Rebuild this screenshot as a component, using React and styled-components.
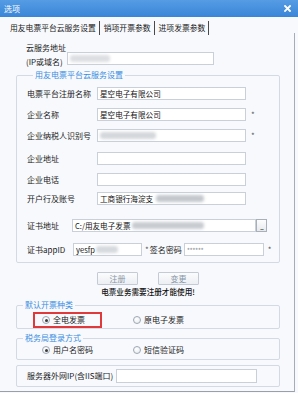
import React from 'react';
import styled, { createGlobalStyle, css } from 'styled-components';

const GlobalStyle = createGlobalStyle`
  * {
    margin: 0;
    padding: 0;
    box-sizing: border-box;
  }
  html, body {
    width: 298px;
    height: 393px;
    overflow: hidden;
    background: #f7f9fd;
  }
  body {
    font-family: "Noto Sans CJK SC", "Noto Sans", sans-serif;
    font-size: 8px;
    color: #1a1a1a;
  }
`;

const Window = styled.div`
  width: 298px;
  height: 393px;
  display: flex;
  flex-direction: column;
  background: #f7f9fd;
  overflow: hidden;
`;

const TitleBar = styled.div`
  height: 17px;
  flex: none;
  display: flex;
  align-items: center;
  justify-content: space-between;
  padding: 0 7px 0 4px;
  background: linear-gradient(#559ce4, #3a85d8);
  color: #fff;
  font-size: 8px;
  line-height: 10px;
`;

const TabStrip = styled.div`
  height: 21px;
  flex: none;
  display: flex;
  align-items: center;
  padding: 0 3px 0 10px;
`;

const Tab = styled.div`
  height: 14px;
  line-height: 14px;
  padding-right: 3px;
  margin-right: 4px;
  border-right: 1px solid #4a4a4a;
  white-space: nowrap;
  font-size: 7.8px;
`;

const TabFill = styled.div`
  flex: 1;
  align-self: flex-end;
  height: 5px;
  border-right: 1px solid #a7adb5;
`;

const Panel = styled.div`
  height: 354px;
  flex: none;
  margin-right: 3px;
  border-right: 1px solid #a7adb5;
  border-bottom: 1px solid #9aa0a8;
  padding: 3px 0 0 16px;
  display: flex;
  flex-direction: column;
`;

const CloudRow = styled.div`
  display: flex;
  align-items: flex-start;
  padding-left: 10px;
  height: 28px;
`;

const CloudLabel = styled.div`
  width: 41px;
  line-height: 14px;
  white-space: nowrap;
`;

const Group = styled.fieldset`
  width: 264px;
  margin-top: ${p => p.$mt ?? 0}px;
  border: 1px solid #d3dae4;
  border-radius: 2px;
  padding: 0 0 ${p => p.$pb ?? 0}px ${p => p.$pl ?? 10}px;
`;

const Legend = styled.legend`
  font-size: 8px;
  line-height: 12px;
  color: #3b8de0;
  padding: 0 2px;
  margin-left: 6px;
`;

const Row = styled.div`
  display: flex;
  align-items: center;
  height: 13px;
  margin-top: ${p => p.$mt}px;
`;

const Label = styled.div`
  width: ${p => p.$w}px;
  flex: none;
  white-space: nowrap;
  line-height: 10px;
`;

const Field = styled.div`
  width: ${p => p.$w}px;
  height: ${p => p.$h ?? 13}px;
  margin-top: ${p => p.$mt ?? 0}px;
  flex: none;
  background: #fff;
  border: 1px solid #c9d0da;
  padding: 0 2px;
  display: flex;
  align-items: center;
  overflow: hidden;
  white-space: nowrap;
  font-size: 7.6px;
  line-height: 10px;
  color: #111;
`;

const Blur = styled.span`
  display: inline-block;
  flex: none;
  width: ${p => p.$w}px;
  height: 7px;
  margin-left: ${p => p.$ml ?? 0}px;
  background: ${p => p.$c || '#cdd0d5'};
  border-radius: 3px;
  filter: blur(1.5px);
`;

const Masked = styled.span`
  color: #8a8f96;
  font-size: 7px;
  letter-spacing: -0.5px;
`;

const Star = styled.span`
  margin-left: ${p => p.$ml ?? 0}px;
  margin-right: ${p => p.$mr ?? 0}px;
  color: #555;
  font-size: 8px;
  line-height: 10px;
`;

const BrowseButton = styled.div`
  width: 11px;
  height: 13px;
  flex: none;
  border: 1px solid #a9b0ba;
  background: linear-gradient(#fdfdfe, #e6e9ed);
  display: flex;
  align-items: flex-end;
  justify-content: center;
  font-size: 7px;
  line-height: 8px;
  color: #333;
  letter-spacing: -1px;
`;

const ButtonRow = styled.div`
  width: 264px;
  display: flex;
  justify-content: center;
  gap: 20px;
  margin-top: 9px;
`;

const Button = styled.div`
  width: 41px;
  height: 13px;
  border: 1px solid #c4cbd5;
  border-radius: 1px;
  background: linear-gradient(#fbfcfd, #eceff3);
  color: #8796a6;
  font-size: 8px;
  line-height: 11px;
  text-align: center;
`;

const Notice = styled.div`
  width: 264px;
  margin-top: 2px;
  text-align: center;
  line-height: 10px;
  font-size: 7.6px;
  font-weight: 500;
  color: #111;
`;

const RadioRow = styled.div`
  display: grid;
  grid-template-columns: ${p => p.$col}px auto;
  align-items: center;
  height: ${p => p.$h}px;
  margin-top: ${p => p.$mt ?? 0}px;
  padding-left: ${p => p.$pl}px;
`;

const Option = styled.div`
  display: flex;
  align-items: center;
  gap: 3px;
  height: 100%;
  white-space: nowrap;
  line-height: 10px;
  ${p => p.$boxed && css`
    width: 69px;
    border: 2px solid #e0393b;
    padding-left: 7px;
  `}
`;

const Radio = styled.span`
  width: 8px;
  height: 8px;
  flex: none;
  border-radius: 50%;
  border: 1px solid #9ea7b2;
  background: radial-gradient(circle at 40% 35%, #ffffff, #e4e8ed);
  display: flex;
  align-items: center;
  justify-content: center;
`;

const Dot = styled.span`
  width: 3px;
  height: 3px;
  border-radius: 50%;
  background: #3a3a3a;
`;

const IpBox = styled.div`
  width: 264px;
  margin-top: 5px;
  border: 1px solid #d3dae4;
  border-radius: 2px;
  padding: 3px 0 3px 10px;
  display: flex;
  align-items: center;
`;

const CloseIcon = () => (
  <svg width="7" height="7" viewBox="0 0 7 7">
    <path d="M1 1 L6 6 M6 1 L1 6" stroke="#fff" strokeWidth="1.8" strokeLinecap="square" />
  </svg>
);

const RadioItem = ({ checked, boxed, children }) => (
  <Option $boxed={boxed}>
    <Radio>{checked && <Dot />}</Radio>
    {children}
  </Option>
);

export default function App() {
  return (
    <>
      <GlobalStyle />
      <Window>
        <TitleBar>
          <span>选项</span>
          <CloseIcon />
        </TitleBar>
        <TabStrip>
          <Tab>用友电票平台云服务设置</Tab>
          <Tab>销项开票参数</Tab>
          <Tab>进项发票参数</Tab>
          <TabFill />
        </TabStrip>
        <Panel>
          <CloudRow>
            <CloudLabel>
              云服务地址
              <br />
              (IP或域名)
            </CloudLabel>
            <Field $w={147} $mt={11}>
              <Blur $w={40} $c="#dcdee2" />
            </Field>
          </CloudRow>

          <Group $pb={6}>
            <Legend>用友电票平台云服务设置</Legend>
            <Row $mt={6}>
              <Label $w={70}>电票平台注册名称</Label>
              <Field $w={149}>星空电子有限公司</Field>
            </Row>
            <Row $mt={8}>
              <Label $w={70}>企业名称</Label>
              <Field $w={149}>星空电子有限公司</Field>
              <Star $ml={5}>*</Star>
            </Row>
            <Row $mt={8}>
              <Label $w={70}>企业纳税人识别号</Label>
              <Field $w={149}>
                <Blur $w={56} $c="#d4d7db" />
              </Field>
              <Star $ml={5}>*</Star>
            </Row>
            <Row $mt={10}>
              <Label $w={70}>企业地址</Label>
              <Field $w={149} />
            </Row>
            <Row $mt={8}>
              <Label $w={70}>企业电话</Label>
              <Field $w={149} />
            </Row>
            <Row $mt={6}>
              <Label $w={70}>开户行及账号</Label>
              <Field $w={149}>
                工商银行海淀支
                <Blur $w={48} $ml={3} $c="#c4c8cd" />
              </Field>
            </Row>
            <Row $mt={14}>
              <Label $w={45}>证书地址</Label>
              <Field $w={184}>
                C:/用友电子发票
                <Blur $w={72} $ml={1} $c="#c8cbd0" />
              </Field>
              <BrowseButton>...</BrowseButton>
            </Row>
            <Row $mt={11}>
              <Label $w={46}>证书appID</Label>
              <Field $w={69}>
                yesfp
                <Blur $w={22} $ml={1} $c="#d6d9dd" />
              </Field>
              <Star $ml={3} $mr={1}>*</Star>
              <Label $w={34}>签名密码</Label>
              <Field $w={80}>
                <Masked>******</Masked>
              </Field>
              <Star $ml={4}>*</Star>
            </Row>
          </Group>

          <ButtonRow>
            <Button>注册</Button>
            <Button>变更</Button>
          </ButtonRow>
          <Notice>电票业务需要注册才能使用!</Notice>

          <Group $mt={2} $pl={0}>
            <Legend>默认开票种类</Legend>
            <RadioRow $col={100} $pl={16} $h={16} $mt={1}>
              <RadioItem checked boxed>全电发票</RadioItem>
              <RadioItem>原电子发票</RadioItem>
            </RadioRow>
          </Group>

          <Group $mt={3} $pl={0} $pb={3}>
            <Legend>税务局登录方式</Legend>
            <RadioRow $col={91} $pl={25} $h={12}>
              <RadioItem checked>用户名密码</RadioItem>
              <RadioItem>短信验证码</RadioItem>
            </RadioRow>
          </Group>

          <IpBox>
            <Label $w={89}>服务器外网IP(含IIS端口)</Label>
            <Field $w={141} $h={14} />
          </IpBox>
        </Panel>
      </Window>
    </>
  );
}
